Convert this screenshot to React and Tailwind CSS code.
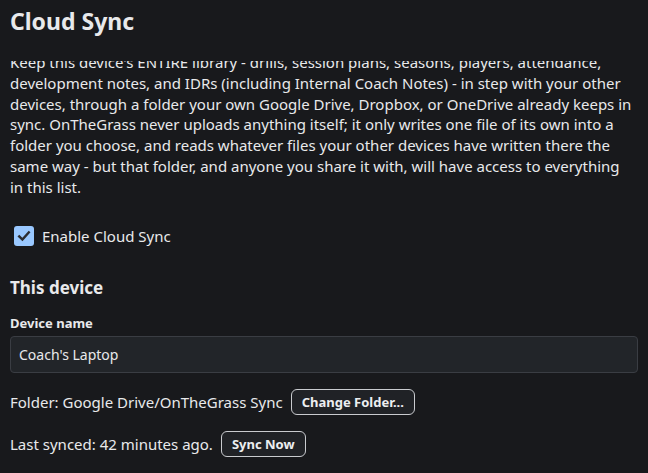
import { useLayoutEffect, useRef, useState } from "react";

const FONT = "font-['Noto_Sans','Open_Sans',sans-serif]";

// paragraph lines, broken as on a 628px wide column
const INTRO = [
  "Keep this device's ENTIRE library - drills, session plans, seasons, players, attendance,",
  "development notes, and IDRs (including Internal Coach Notes) - in step with your other",
  "devices, through a folder your own Google Drive, Dropbox, or OneDrive already keeps in",
  "sync. OnTheGrass never uploads anything itself; it only writes one file of its own into a",
  "folder you choose, and reads whatever files your other devices have written there the",
  "same way - but that folder, and anyone you share it with, will have access to everything",
  "in this list.",
];

function Checkbox({ checked, onChange, label }) {
  return (
    <label className="flex items-center gap-2 cursor-pointer select-none">
      <span
        onClick={() => onChange(!checked)}
        className={`w-5 h-5 rounded-[3px] flex items-center justify-center ${checked ? "bg-[#99c8ff]" : "border-2 border-[#8a8d93]"}`}
      >
        {checked && (
          <svg viewBox="0 0 20 20" className="w-4 h-4">
            <path d="M4 10.5l4 4 8-9" fill="none" stroke="#2b2d31" strokeWidth="3" strokeLinecap="square" />
          </svg>
        )}
      </span>
      <span className="text-[15px] text-[#e8e9eb]">{label}</span>
    </label>
  );
}

function SmallButton({ children }) {
  return (
    <button className="h-[26px] px-[10px] rounded-md border border-[#c9cbcf] bg-[#202226] text-[13px] font-bold text-[#eceef0] leading-none">
      {children}
    </button>
  );
}

export default function App() {
  const [enabled, setEnabled] = useState(true);
  const [name, setName] = useState("Coach's Laptop");
  const scroller = useRef(null);

  // page is shown scrolled a little, heading stays pinned
  useLayoutEffect(() => {
    if (scroller.current) scroller.current.scrollTop = 17;
  }, []);

  return (
    <div
      ref={scroller}
      className={`h-[473px] overflow-y-auto [scrollbar-width:none] bg-[#18191c] text-[#e8e9eb] ${FONT}`}
    >
      <div className="sticky top-0 z-10 h-[61px] -mb-[4px] bg-[#18191c] px-[10px] pt-[3px]">
        <h1 className="text-[23px] font-bold leading-[36px]">Cloud Sync</h1>
      </div>

      <div className="px-[10px] pt-[12px] pb-10">
        <p className="text-[15px] leading-[20.8px] text-[#e8e9eb]">
          {INTRO.map((l, i) => (
            <span key={i} className="block whitespace-nowrap">{l}</span>
          ))}
        </p>

        <div className="mt-[27px] pl-[4px]">
          <Checkbox checked={enabled} onChange={setEnabled} label="Enable Cloud Sync" />
        </div>

        <h2 className="mt-[29px] text-[17px] font-bold leading-6">This device</h2>

        <label className="block mt-[15px] text-[13px] font-bold leading-4">Device name</label>
        <input
          value={name}
          onChange={e => setName(e.target.value)}
          className="mt-[5px] w-full h-[37px] rounded bg-[#222529] border border-[#3a3d43] px-[8px] text-sm text-[#e8e9eb] outline-none"
        />

        <div className="mt-[16px] flex items-center gap-[8px] text-[15px]">
          <span>Folder: Google Drive/OnTheGrass Sync</span>
          <SmallButton>Change Folder...</SmallButton>
        </div>

        <div className="mt-[16px] flex items-center gap-[8px] text-[15px]">
          <span>Last synced: 42 minutes ago.</span>
          <SmallButton>Sync Now</SmallButton>
        </div>

        <div className="h-16" />
      </div>
    </div>
  );
}
